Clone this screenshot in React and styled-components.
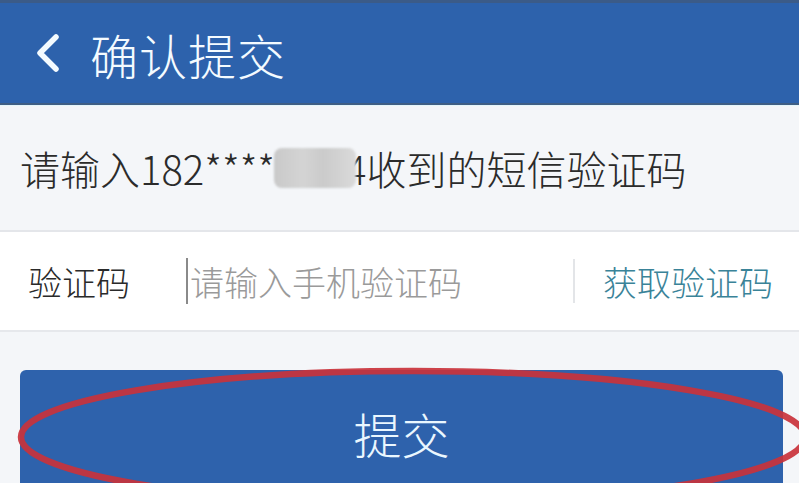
import styled, { createGlobalStyle } from 'styled-components'

const GlobalStyle = createGlobalStyle`
    html, body {
        margin: 0;
        padding: 0;
        background: #f4f6f9;
        overflow: hidden;
    }
    body {
        font-family: "Noto Sans CJK SC", "Noto Sans", sans-serif;
    }
`

const Page = styled.div`
    width: 799px;
    height: 483px;
    position: relative;
    overflow: hidden;
    background: #f4f6f9;
    font-weight: 300;
`

const Header = styled.header`
    height: 100px;
    display: flex;
    align-items: center;
    gap: 28px;
    padding: 0 0 0 34px;
    background: #2d62ac;
    border-top: 3px solid #3b5b88;
    border-bottom: 2px solid #3f5e84;
    box-shadow: 0 1px 0 #e4f6fb;
    color: #f4fbff;
`

const Title = styled.h1`
    margin: 0;
    font-size: 48px;
    font-weight: 300;
    letter-spacing: 1px;
    line-height: 1;
    padding-top: 2px;
`

const Notice = styled.div`
    height: 126px;
    display: flex;
    align-items: center;
    padding: 0 0 0 20px;
    font-size: 40px;
    color: #2b2b2b;
    border-bottom: 2px solid #e4e6ea;
    box-sizing: border-box;
    margin-top: 1px;
`

const Masked = styled.span`
    display: inline-block;
    width: 82px;
    height: 40px;
    border-radius: 8px;
    margin: 0 -11px 0 -1px;
    vertical-align: middle;
    position: relative;
    z-index: 1;
    background: linear-gradient(90deg, #c9c9c9 0%, #d4d4d4 35%, #cbcbcb 60%, #dadada 100%);
    filter: blur(1px);
`

const FieldRow = styled.div`
    height: 100px;
    display: flex;
    align-items: center;
    background: #fff;
    border-bottom: 2px solid #e6e8ec;
    box-sizing: border-box;
    padding: 0 26px 0 28px;
`

const Label = styled.span`
    width: 158px;
    font-size: 34px;
    color: #2a2a2a;
`

const Input = styled.div`
    flex: 1;
    display: flex;
    align-items: center;
    font-size: 34px;
    color: #9a9a9a;
`

const Caret = styled.span`
    width: 2px;
    height: 46px;
    background: #8a8a8a;
    margin-right: 2px;
`

const Divider = styled.span`
    width: 2px;
    height: 44px;
    background: #e3e5e8;
    margin-right: 28px;
`

const GetCode = styled.span`
    font-size: 34px;
    color: #3a8398;
`

const Actions = styled.div`
    padding: 38px 16px 0 20px;
`

const SubmitButton = styled.button`
    width: 100%;
    height: 124px;
    border: none;
    border-radius: 6px;
    background: #2e62ac;
    color: #eaf7ff;
    font-family: "Noto Sans CJK SC", sans-serif;
    font-size: 48px;
    font-weight: 300;
    display: flex;
    justify-content: center;
    align-items: flex-start;
    padding-top: 28px;
    box-sizing: border-box;
`

const Mark = styled.svg`
    position: absolute;
    left: 0;
    top: 0;
    pointer-events: none;
`

const BackIcon = () => (
    <svg width="28" height="40" viewBox="0 0 28 40">
        <path d="M22 4 L6 20 L22 36" fill="none" stroke="#f4fbff" strokeWidth="5.5" strokeLinecap="round" strokeLinejoin="round" />
    </svg>
)

const App = () => {
    return (
        <Page>
            <GlobalStyle />
            <Header>
                <BackIcon />
                <Title>确认提交</Title>
            </Header>
            <Notice>
                请输入182****<Masked />4收到的短信验证码
            </Notice>
            <FieldRow>
                <Label>验证码</Label>
                <Input>
                    <Caret />
                    请输入手机验证码
                </Input>
                <Divider />
                <GetCode>获取验证码</GetCode>
            </FieldRow>
            <Actions>
                <SubmitButton>提交</SubmitButton>
            </Actions>
            <Mark width="799" height="483" viewBox="0 0 799 483">
                <ellipse cx="413" cy="437" rx="392" ry="66" fill="none" stroke="#c9323b" strokeWidth="6.5" opacity="0.92" />
            </Mark>
        </Page>
    )
}

export default App
